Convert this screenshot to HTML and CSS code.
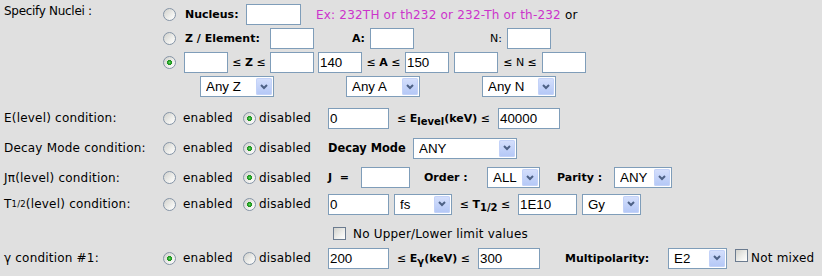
FILE: index.html
```html
<!DOCTYPE html>
<html lang="en">
<head>
  <meta charset="UTF-8">
  <meta name="viewport" content="width=device-width, initial-scale=1.0">
  <title>Level Search</title>
  <link rel="stylesheet" href="styles.css">
</head>
<body>
<form class="search">

  <!-- nuclei -->
  <div class="lbl lbl-nuc">Specify Nuclei :</div>
  <div class="nuclei">
    <div class="nrow">
      <input type="radio" name="nuc" class="radio">
      <span class="b key k-nuc">Nucleus:</span>
      <input type="text" class="txt w55">
      <span class="hint"><span class="ex">Ex: 232TH or th232 or 232-Th or th-232</span> or</span>
    </div>
    <div class="nrow">
      <input type="radio" name="nuc" class="radio">
      <span class="b key k-zel">Z / Element:</span>
      <input type="text" class="txt w44">
      <span class="b key k-a">A:</span>
      <input type="text" class="txt w44">
      <span class="key k-n">N:</span>
      <input type="text" class="txt w44">
    </div>
    <div class="nrow">
      <input type="radio" name="nuc" class="radio" checked>
      <input type="text" class="txt w44 ml8">
      <span class="rng w42">&le; <b>Z</b> &le;</span>
      <input type="text" class="txt w44">
      <input type="text" class="txt w44 ml4" value="140">
      <span class="rng w43">&le; <b>A</b> &le;</span>
      <input type="text" class="txt w44" value="150">
      <input type="text" class="txt w44 ml5">
      <span class="rng w44">&le; N &le;</span>
      <input type="text" class="txt w44">
    </div>
    <div class="nrow">
      <span class="sel w74 ml42"><select><option>Any Z</option></select><span class="drop"><svg width="8" height="6" viewBox="0 0 8 6"><path d="M1 1l3 3 3-3" fill="none" stroke="#4d6185" stroke-width="2"/></svg></span></span>
      <span class="sel w74 ml72"><select><option>Any A</option></select><span class="drop"><svg width="8" height="6" viewBox="0 0 8 6"><path d="M1 1l3 3 3-3" fill="none" stroke="#4d6185" stroke-width="2"/></svg></span></span>
      <span class="sel w74 ml62"><select><option>Any N</option></select><span class="drop"><svg width="8" height="6" viewBox="0 0 8 6"><path d="M1 1l3 3 3-3" fill="none" stroke="#4d6185" stroke-width="2"/></svg></span></span>
    </div>
  </div>

  <!-- level energy -->
  <div class="lbl">E(level) condition:</div>
  <div class="opts">
    <input type="radio" name="elev" class="radio">
    <span class="opt">enabled</span>
    <input type="radio" name="elev" class="radio" checked>
    <span class="opt2">disabled</span>
  </div>
  <div class="vals">
    <input type="text" class="txt w61" value="0">
    <span class="rng w109">&le; <b>E<sub>level</sub>(keV)</b> &le;</span>
    <input type="text" class="txt w62" value="40000">
  </div>

  <!-- decay mode -->
  <div class="lbl">Decay Mode condition:</div>
  <div class="opts">
    <input type="radio" name="dm" class="radio">
    <span class="opt">enabled</span>
    <input type="radio" name="dm" class="radio" checked>
    <span class="opt2">disabled</span>
  </div>
  <div class="vals">
    <span class="b key w85 big">Decay Mode</span>
    <span class="sel w104"><select><option>ANY</option></select><span class="drop"><svg width="8" height="6" viewBox="0 0 8 6"><path d="M1 1l3 3 3-3" fill="none" stroke="#4d6185" stroke-width="2"/></svg></span></span>
  </div>

  <!-- spin parity -->
  <div class="lbl">J&pi;(level) condition:</div>
  <div class="opts">
    <input type="radio" name="jp" class="radio">
    <span class="opt">enabled</span>
    <input type="radio" name="jp" class="radio" checked>
    <span class="opt2">disabled</span>
  </div>
  <div class="vals">
    <span class="b key w33">J &nbsp;=</span>
    <input type="text" class="txt w49">
    <span class="b key w77 pl14">Order :</span>
    <span class="sel w53"><select><option>ALL</option></select><span class="drop"><svg width="8" height="6" viewBox="0 0 8 6"><path d="M1 1l3 3 3-3" fill="none" stroke="#4d6185" stroke-width="2"/></svg></span></span>
    <span class="b key w74 pl17">Parity :</span>
    <span class="sel w58"><select><option>ANY</option></select><span class="drop"><svg width="8" height="6" viewBox="0 0 8 6"><path d="M1 1l3 3 3-3" fill="none" stroke="#4d6185" stroke-width="2"/></svg></span></span>
  </div>

  <!-- half life -->
  <div class="lbl top">T<sub class="lsub">1/2</sub>(level) condition:</div>
  <div class="opts top">
    <input type="radio" name="hl" class="radio">
    <span class="opt">enabled</span>
    <input type="radio" name="hl" class="radio" checked>
    <span class="opt2">disabled</span>
  </div>
  <div class="vals stack">
    <div class="line">
      <input type="text" class="txt w61" value="0">
      <span class="sel w58 ml5"><select><option>fs</option></select><span class="drop"><svg width="8" height="6" viewBox="0 0 8 6"><path d="M1 1l3 3 3-3" fill="none" stroke="#4d6185" stroke-width="2"/></svg></span></span>
      <span class="rng w66">&le; <b>T<sub>1/2</sub></b> &le;</span>
      <input type="text" class="txt w59" value="1E10">
      <span class="sel w59 ml5"><select><option>Gy</option></select><span class="drop"><svg width="8" height="6" viewBox="0 0 8 6"><path d="M1 1l3 3 3-3" fill="none" stroke="#4d6185" stroke-width="2"/></svg></span></span>
    </div>
    <div class="nolimit">
      <input type="checkbox" class="check ml5">
      <span class="ml7">No Upper/Lower limit values</span>
    </div>
  </div>

  <!-- gamma -->
  <div class="lbl">&gamma; condition #1:</div>
  <div class="opts">
    <input type="radio" name="g1" class="radio" checked>
    <span class="opt">enabled</span>
    <input type="radio" name="g1" class="radio">
    <span class="opt2">disabled</span>
  </div>
  <div class="vals">
    <input type="text" class="txt w61" value="200">
    <span class="rng w89">&le; <b>E<sub>&gamma;</sub>(keV)</b> &le;</span>
    <input type="text" class="txt w62" value="300">
    <span class="b key w128 pl25">Multipolarity:</span>
    <span class="sel w59"><select><option>E2</option></select><span class="drop"><svg width="8" height="6" viewBox="0 0 8 6"><path d="M1 1l3 3 3-3" fill="none" stroke="#4d6185" stroke-width="2"/></svg></span></span>
    <input type="checkbox" class="check raised">
    <span class="ml3">Not mixed</span>
  </div>

</form>
</body>
</html>
```

FILE: styles.css
```css
body {
  margin: 0;
  background: #e0e0e0;
  color: #000;
  font-family: Verdana, "DejaVu Sans", sans-serif;
  font-size: 12px;
  letter-spacing: .2px;
}
.search {
  display: grid;
  grid-template-columns: 154px 170px 1fr;
  grid-template-rows: 103px 30px 30px 29px 54px 24px;
  padding-left: 4px;
}
.lbl, .opts, .vals {
  display: flex;
  align-items: center;
  white-space: nowrap;
}
.lbl-nuc {
  align-items: flex-start;
  padding-top: 4px;
  font-size: 12px;
  letter-spacing: -.3px;
  line-height: 14px;
}
.top {
  align-self: start;
  height: 22px;
  margin-top: 1px;
}
sub {
  font-size: 10px;
  line-height: 0;
  vertical-align: -3px;
}
.lsub {
  font-size: 8.5px;
  vertical-align: -2px;
}

/* nuclei block */
.nuclei {
  grid-column: 2 / 4;
  display: flex;
  flex-direction: column;
  gap: 3px;
  padding-top: 4px;
}
.nrow {
  display: flex;
  align-items: center;
  height: 21px;
  white-space: nowrap;
}
.b {
  font-weight: bold;
  font-size: 11px;
  letter-spacing: 0;
}
.big { font-size: 11.4px; }
.key {
  flex: none;
  box-sizing: border-box;
}
.k-nuc { margin-left: 9px; width: 61px; }
.k-zel { margin-left: 9px; width: 85px; }
.k-a { width: 56px; text-align: right; padding-right: 5px; }
.k-n { width: 93px; text-align: right; padding-right: 5px; font-size: 11px; letter-spacing: 0; }
.hint { margin-left: 15px; }
.ex { color: #cc33cc; }
.rng {
  flex: none;
  text-align: center;
  font-size: 11px;
  letter-spacing: 0;
}

/* radios / checks, xp look */
.radio {
  appearance: none;
  box-sizing: border-box;
  flex: none;
  width: 13px;
  height: 13px;
  margin: 0 0 0 5px;
  border: 1px solid #8594a6;
  border-radius: 50%;
  background: linear-gradient(135deg, #d0d0cc 0%, #efefec 60%, #fff 100%);
}
.radio:checked {
  background: radial-gradient(circle, #6ad86a 0, #22a322 1.6px, #1e8f1e 2.3px, transparent 2.8px),
    linear-gradient(135deg, #d0d0cc 0%, #efefec 60%, #fff 100%);
}
.check {
  appearance: none;
  box-sizing: border-box;
  flex: none;
  width: 13px;
  height: 13px;
  margin: 0;
  border: 1px solid #6b7b8f;
  background: linear-gradient(135deg, #d2d2cd 0%, #efefec 60%, #fff 100%);
}
.raised {
  align-self: flex-start;
  margin: 3px 0 0 8px;
}
.opt { margin-left: 7px; width: 55px; }
.opt2 { margin-left: 3px; }

/* text boxes */
.txt {
  box-sizing: border-box;
  flex: none;
  height: 21px;
  margin: 0;
  padding: 0 1px;
  border: 1px solid #7f9db9;
  background: #fff;
  font: 13.33px "Liberation Sans", Arial, sans-serif;
  color: #000;
}

/* drop downs */
.sel {
  display: inline-flex;
  box-sizing: border-box;
  flex: none;
  height: 21px;
  padding: 1px;
  border: 1px solid #7f9db9;
  background: #fff;
}
.sel select {
  appearance: none;
  flex: 1;
  min-width: 0;
  margin: 0;
  padding: 0 0 0 4px;
  border: 0;
  outline: none;
  background: transparent;
  font: 13.33px "Liberation Sans", Arial, sans-serif;
  color: #000;
}
.drop {
  display: flex;
  align-items: center;
  justify-content: center;
  flex: none;
  width: 16px;
  border-radius: 2px;
  background: linear-gradient(#d6e0fc, #b3c7f6);
  box-shadow: inset 0 0 0 1px #c3d2f8;
}

/* value column */
.stack {
  flex-direction: column;
  align-items: flex-start;
}
.line {
  display: flex;
  align-items: center;
  height: 22px;
  margin-top: 1px;
}
.nolimit {
  display: flex;
  align-items: center;
  height: 23px;
  margin-top: 7px;
}

/* sizes */
.w33 { width: 33px; }
.w42 { width: 42px; }
.w43 { width: 43px; }
.w44 { width: 44px; }
.w49 { width: 49px; }
.w53 { width: 53px; }
.w55 { width: 55px; }
.w58 { width: 58px; }
.w59 { width: 59px; }
.w61 { width: 61px; }
.w62 { width: 62px; }
.w66 { width: 66px; }
.w74 { width: 74px; }
.w77 { width: 77px; }
.w85 { width: 85px; }
.w89 { width: 89px; }
.w104 { width: 104px; }
.w109 { width: 109px; }
.w128 { width: 128px; }
.ml3 { margin-left: 3px; }
.ml4 { margin-left: 4px; }
.ml5 { margin-left: 5px; }
.ml7 { margin-left: 7px; }
.ml8 { margin-left: 8px; }
.ml42 { margin-left: 42px; }
.ml62 { margin-left: 62px; }
.ml72 { margin-left: 72px; }
.pl14 { padding-left: 14px; }
.pl17 { padding-left: 17px; }
.pl25 { padding-left: 25px; }
```
